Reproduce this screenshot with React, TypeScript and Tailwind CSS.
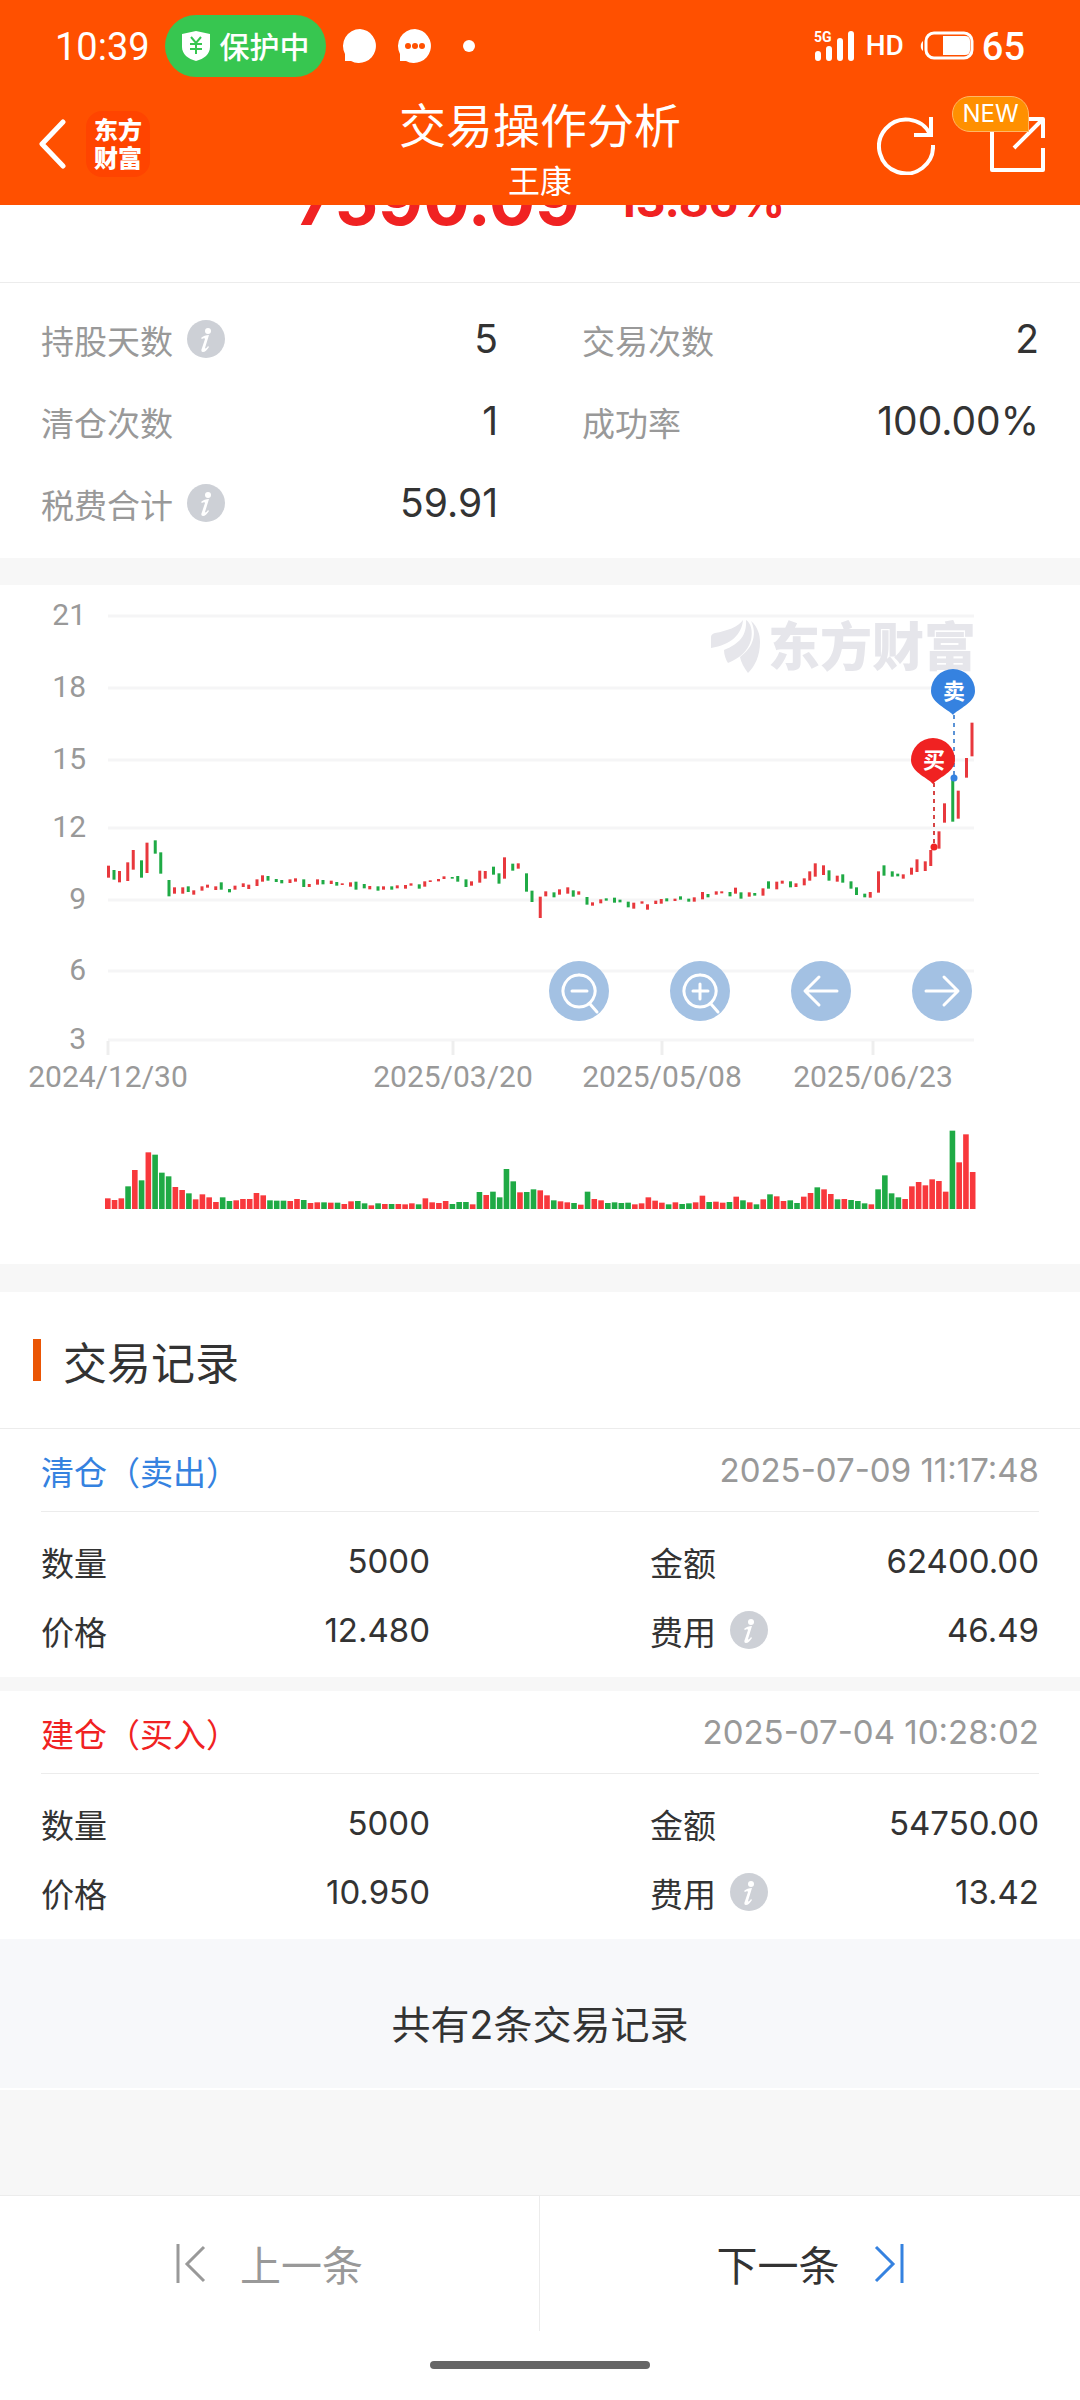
import React from "react";

type Move = "r" | "g";

const RED = "#e8383d";
const GREEN = "#1faa45";

/* Each entry: direction, top and bottom of the price bar, top of the volume bar. */
const SERIES: [Move, number, number, number][] = [
  ["r", 827, 863, 265], ["g", 840, 869, 270], ["r", 843, 877, 265], ["r", 817, 873, 229],
  ["r", 780, 839, 180], ["g", 811, 863, 211], ["r", 758, 849, 127], ["g", 751, 791, 134],
  ["g", 787, 851, 188], ["g", 870, 919, 199], ["r", 892, 911, 231], ["r", 892, 911, 240],
  ["g", 889, 906, 250], ["r", 901, 914, 268], ["r", 889, 902, 253], ["r", 884, 893, 262],
  ["r", 889, 900, 276], ["g", 877, 899, 262], ["g", 897, 907, 273], ["r", 887, 899, 271],
  ["r", 880, 891, 267], ["r", 884, 897, 267], ["r", 868, 888, 249], ["r", 856, 875, 256],
  ["g", 858, 872, 271], ["g", 867, 876, 272], ["g", 870, 880, 272], ["r", 868, 879, 273],
  ["r", 865, 875, 267], ["g", 868, 891, 270], ["r", 882, 891, 279], ["r", 868, 884, 277],
  ["g", 870, 883, 277], ["r", 872, 882, 278], ["g", 876, 887, 278], ["r", 880, 885, 282],
  ["r", 877, 890, 274], ["g", 875, 899, 273], ["g", 882, 895, 280], ["r", 888, 898, 286],
  ["g", 889, 902, 280], ["r", 889, 899, 282], ["g", 889, 899, 282], ["r", 886, 895, 282],
  ["r", 885, 896, 283], ["r", 880, 887, 280], ["g", 883, 896, 283], ["r", 874, 890, 265],
  ["r", 871, 876, 277], ["r", 867, 874, 279], ["r", 859, 867, 273], ["g", 861, 866, 282],
  ["g", 858, 875, 276], ["g", 868, 891, 276], ["r", 874, 887, 283], ["r", 842, 878, 246],
  ["r", 843, 866, 255], ["g", 830, 854, 245], ["g", 850, 881, 262], ["r", 802, 866, 177],
  ["g", 821, 842, 214], ["r", 820, 836, 247], ["g", 850, 905, 246], ["g", 902, 936, 238],
  ["r", 920, 984, 241], ["r", 904, 919, 256], ["g", 907, 922, 271], ["r", 898, 914, 274],
  ["r", 892, 911, 277], ["g", 901, 920, 279], ["r", 904, 914, 284], ["g", 921, 944, 245],
  ["r", 937, 947, 267], ["r", 928, 940, 271], ["g", 925, 932, 279], ["g", 923, 938, 277],
  ["g", 929, 937, 279], ["g", 935, 952, 278], ["r", 938, 956, 283], ["r", 934, 941, 280],
  ["r", 943, 959, 262], ["r", 932, 942, 272], ["r", 927, 941, 278], ["g", 925, 934, 283],
  ["r", 926, 933, 277], ["g", 919, 929, 282], ["g", 926, 935, 280], ["r", 922, 935, 277],
  ["r", 906, 928, 257], ["g", 912, 922, 276], ["r", 904, 914, 275], ["r", 904, 910, 278],
  ["g", 906, 919, 276], ["r", 893, 911, 260], ["g", 907, 926, 271], ["r", 907, 920, 277],
  ["g", 909, 917, 283], ["r", 895, 917, 268], ["g", 874, 896, 253], ["r", 875, 898, 259],
  ["r", 872, 881, 273], ["g", 874, 892, 271], ["r", 880, 891, 279], ["r", 865, 886, 260],
  ["r", 844, 872, 249], ["r", 820, 860, 232], ["r", 826, 855, 238], ["g", 841, 872, 252],
  ["r", 857, 875, 268], ["g", 853, 878, 267], ["g", 874, 896, 270], ["g", 892, 915, 273],
  ["g", 911, 922, 280], ["r", 906, 923, 283], ["r", 844, 908, 238], ["g", 826, 857, 196],
  ["g", 844, 860, 250], ["g", 851, 859, 262], ["r", 853, 866, 267], ["r", 833, 854, 229],
  ["r", 808, 846, 216], ["r", 814, 843, 226], ["r", 780, 828, 208], ["r", 724, 776, 213],
  ["r", 640, 698, 245], ["g", 570, 695, 62], ["r", 602, 686, 157], ["r", 504, 563, 73],
  ["r", 398, 499, 186],
];

const VOLUME_MOVES =
  "rrrgrgrggg" + "rrgrrrrggr" + "rrrrgggrrg" + "rrgrgrrggr" + "grgrrrgrrr" +
  "rgggrgrggg" + "grggrrgrrg" + "rgrrgggg" + "rrrrrgrggr" + "rgrrgrgrgr" +
  "grrggrrgrr" + "grgggrgggg" + "rrrrrrrgrrr";

const AXIS: [string, number][] = [
  ["21", 31], ["18", 103], ["15", 175], ["12", 243], ["9", 315], ["6", 386], ["3", 455],
];

const DATES: [string, number][] = [
  ["2024/12/30", 108], ["2025/03/20", 453], ["2025/05/08", 662], ["2025/06/23", 873],
];

function PriceChart() {
  return (
    <svg viewBox="0 0 1080 679" className="block w-full" role="img" aria-label="股价走势与买卖点">
      {AXIS.map(([label, y]) => (
        <g key={label}>
          <line x1="108" x2="974" y1={y} y2={y} stroke="#f5f5f6" strokeWidth="3" />
          <text x="86" y={y + 9} textAnchor="end" fontSize="30" fill="#999999" className="font-[Roboto]">
            {label}
          </text>
        </g>
      ))}
      {DATES.map(([label, x]) => (
        <g key={label}>
          <line x1={x} x2={x} y1="456" y2="470" stroke="#eeeeee" strokeWidth="3" />
          <text x={x} y="502" textAnchor="middle" fontSize="30" fill="#999999" className="font-[Roboto]">
            {label}
          </text>
        </g>
      ))}

      <g fill="#e6e6eb">
        <path d="M711 63 V52 C711 50 712 49 715 48 C727 46 738 42 743 35 C742 49 731 60 711 63 Z" />
        <path d="M746 35 C751 38 753 46 751 55 C748 66 740 73 728 78 C726 75 724 70 724 65 C739 59 747 51 746 35 Z" />
        <path d="M751 36 C758 42 760 50 760 57 C760 71 755 81 748 88 C744 83 741 77 740 72 C754 62 757 48 751 36 Z" />
        <text x="768" y="81" fontSize="52" fontWeight="900" className="font-['Noto_Sans_CJK_SC']">
          东方财富
        </text>
      </g>

      {SERIES.map(([move, top, bottom, volume], i) => {
        const x = 108 + (Math.floor(i * 2.457) * 11) / 4;
        return (
          <g key={i}>
            <rect x={x - 1} y={top / 3 + 5} width="3" height={(bottom - top) / 3} fill={move === "r" ? RED : GREEN} />
            <rect
              x={105 + i * 6.757}
              y={volume / 3 + 525}
              width="5.6"
              height={(297 - volume) / 3}
              fill={VOLUME_MOVES[i] === "r" ? "#f8383c" : GREEN}
            />
          </g>
        );
      })}

      <line x1="954" x2="954" y1="130" y2="190" stroke="#5b93d6" strokeWidth="2" strokeDasharray="4 4" />
      <circle cx="954" cy="193" r="3.5" fill="#3582e0" />
      <line x1="934" x2="934" y1="198" y2="260" stroke="#d64545" strokeWidth="2" strokeDasharray="4 4" />
      <circle cx="934" cy="262" r="3.5" fill="#f02222" />

      <path d="M953 130 C948 124 931 118 931 106 A22 22 0 1 1 975 106 C975 118 958 124 953 130 Z" fill="#3582e0" />
      <text x="954" y="114" textAnchor="middle" fontSize="22" fontWeight="700" fill="#fff" className="font-['Noto_Sans_CJK_SC']">
        卖
      </text>
      <path d="M933 199 C928 193 911 187 911 175 A22 22 0 1 1 955 175 C955 187 938 193 933 199 Z" fill="#f02222" />
      <text x="934" y="183" textAnchor="middle" fontSize="22" fontWeight="700" fill="#fff" className="font-['Noto_Sans_CJK_SC']">
        买
      </text>
    </svg>
  );
}

const TOOLS: { label: string; d: string }[] = [
  { label: "缩小", d: "M30 14 a16 16 0 1 0 0.1 0 M41 43 l7 8 M23 30 h15" },
  { label: "放大", d: "M30 14 a16 16 0 1 0 0.1 0 M41 43 l7 8 M23 30 h15 M30 23 v15" },
  { label: "左移", d: "M46 30 H15 M28 16 L14 30 L28 44" },
  { label: "右移", d: "M14 30 H45 M32 16 L46 30 L32 44" },
];

function InfoButton({ label }: { label: string }) {
  return (
    <button type="button" aria-label={label} className="-mt-2 size-[38px]">
      <svg viewBox="0 0 38 38" className="size-full">
        <circle cx="19" cy="19" r="19" fill="#cdd0d6" />
        <circle cx="21" cy="11" r="3" fill="#fff" />
        <path d="M14 18 C16 16 19 15 22 15 L18 28 C18 29 20 28 21 26 L22 27 C20 30 18 32 16 32 C14 32 14 30 15 28 L18 19 C18 18 16 18 15 19 Z" fill="#fff" />
      </svg>
    </button>
  );
}

function Stat({ label, value, info }: { label: string; value: string; info?: boolean }) {
  return (
    <div className="flex h-[82px] items-center justify-between">
      <dt className="flex items-center gap-[14px] pt-2 text-[33px] text-[#999]">
        {label}
        {info && <InfoButton label={label + "说明"} />}
      </dt>
      <dd className="text-[39px] text-[#333]">{value}</dd>
    </div>
  );
}

function Field({ label, value, info }: { label: string; value: string; info?: boolean }) {
  return (
    <div className="flex h-[69px] items-center justify-between">
      <dt className="flex items-center gap-[14px] pt-2">
        {label}
        {info && <InfoButton label={label + "说明"} />}
      </dt>
      <dd className="pt-0.5">{value}</dd>
    </div>
  );
}

type Trade = { kind: string; tone: string; time: string; qty: string; amount: string; price: string; fee: string };

const TRADES: Trade[] = [
  { kind: "清仓（卖出）", tone: "text-[#3582e0]", time: "2025-07-09 11:17:48", qty: "5000", amount: "62400.00", price: "12.480", fee: "46.49" },
  { kind: "建仓（买入）", tone: "text-[#f02222]", time: "2025-07-04 10:28:02", qty: "5000", amount: "54750.00", price: "10.950", fee: "13.42" },
];

function TradeCard({ trade }: { trade: Trade }) {
  return (
    <li className="bg-white px-[41px] text-[33px] text-[#333]">
      <div className="flex h-[83px] items-center justify-between border-b border-[#ececec]">
        <h3 className={"pt-2 " + trade.tone}>{trade.kind}</h3>
        <time className="pt-0.5 text-[#999]">{trade.time}</time>
      </div>
      <dl className="grid grid-cols-2 gap-x-[220px] pt-[14px] pb-[13px]">
        <Field label="数量" value={trade.qty} />
        <Field label="金额" value={trade.amount} />
        <Field label="价格" value={trade.price} />
        <Field label="费用" value={trade.fee} info />
      </dl>
    </li>
  );
}

function StatusBar() {
  return (
    <div className="flex h-[92px] items-center px-[55px] text-[38px]">
      <span className="w-[110px] pt-0.5 font-[Roboto]">10:39</span>
      <span className="flex h-[62px] w-[161px] items-center justify-center gap-[10px] rounded-full bg-[#37c650] text-[30px] font-medium">
        <svg viewBox="0 0 28 30" className="h-[30px] w-[28px]">
          <path d="M14 0 L28 3 V16 C28 23 22 28 14 30 C6 28 0 23 0 16 V3 Z" fill="#fff" />
          <path d="M9 6 L14 12 L19 6 M14 12 V23 M8 13 H20 M8 18 H20" stroke="#37c650" strokeWidth="2" fill="none" />
        </svg>
        <span className="pt-0.5">保护中</span>
      </span>
      <svg viewBox="0 0 36 36" className="ml-4 size-9">
        <path d="M18 1 a17 17 0 1 1 -9 32 L3 33 V26 A17 17 0 0 1 18 1 Z" fill="#fff" />
      </svg>
      <svg viewBox="0 0 36 36" className="ml-[19px] size-9">
        <path d="M18 1 a17 17 0 1 1 -9 32 L3 33 V26 A17 17 0 0 1 18 1 Z" fill="#fff" />
        <g fill="#ff5000"><circle cx="11" cy="18" r="3" /><circle cx="18" cy="18" r="3" /><circle cx="25" cy="18" r="3" /></g>
      </svg>
      <span className="ml-[30px] size-3 rounded-full bg-white" />
      <svg viewBox="0 0 40 32" className="ml-auto h-8 w-10">
        <text x="0" y="12" fontSize="14" fontWeight="700" fill="#fff" className="font-[Roboto]">5G</text>
        <g stroke="#fff" strokeWidth="6" strokeLinecap="round"><path d="M4 24 V28 M15 19 V28 M26 11 V28 M37 4 V28" /></g>
      </svg>
      <span className="ml-3 font-[Roboto] text-[28px] font-medium">HD</span>
      <svg viewBox="0 0 54 30" className="ml-4 h-[30px] w-[54px]">
        <path d="M3 10 C0 12 0 18 3 20 Z" fill="#fff" />
        <rect x="6" y="2" width="46" height="25" rx="8" fill="none" stroke="#fff" strokeWidth="3" />
        <path d="M23 5 H45 Q50 5 50 10 V19 Q50 24 45 24 H23 Z" fill="#fff" />
      </svg>
      <span className="ml-2 pt-0.5 font-[Roboto] font-medium">65</span>
    </div>
  );
}

export default function App() {
  return (
    <div className="flex min-h-screen flex-col bg-[#f7f7f7] font-[Inter,'Noto_Sans_CJK_SC',sans-serif]">
      <header className="bg-[#ff5000] text-white">
        <StatusBar />
        <div className="flex h-[113px] items-start justify-between px-[34px]">
          <div className="flex flex-1 items-center gap-[18px] pt-[19px]">
            <button type="button" aria-label="返回">
              <svg viewBox="0 0 34 50" className="h-[50px] w-[34px]" fill="none" stroke="#fff" strokeWidth="5" strokeLinecap="round" strokeLinejoin="round">
                <path d="M29 3 L8 25 L29 47" />
              </svg>
            </button>
            <a href="#home" className="flex h-[66px] w-[64px] flex-col items-center justify-center rounded-2xl bg-[#ff4400] pt-0.5 text-[24px] leading-[28px] font-black">
              <span>东方</span>
              <span>财富</span>
            </a>
          </div>
          <div className="text-center">
            <h1 className="text-[47px] leading-[67px]">交易操作分析</h1>
            <p className="text-[32px] leading-[46px]">王康</p>
          </div>
          <div className="flex flex-1 justify-end gap-[55px] pt-[23px]">
            <button type="button" aria-label="刷新">
              <svg viewBox="0 0 58 60" className="h-[60px] w-[58px]" fill="none" stroke="#fff" strokeWidth="4">
                <path d="M56 30 A27 27 0 1 1 53 19 M54 2 V20 H37" />
              </svg>
            </button>
            <button type="button" aria-label="分享" className="relative">
              <svg viewBox="0 0 56 60" className="h-[60px] w-14" fill="none" stroke="#fff" strokeWidth="4" strokeLinejoin="round">
                <path d="M2 14 V55 H53 V33 M36 4 H53 V23 M53 4 L24 33" />
              </svg>
              <span className="absolute -top-[19px] right-[17px] flex h-9 w-[77px] items-center justify-center rounded-full rounded-br-none border border-[#ffb766] bg-[#ff9000] text-[24px]">
                NEW
              </span>
            </button>
          </div>
        </div>
      </header>

      <section className="overflow-hidden bg-white">
        <div className="-mt-[43px] flex h-[121px] items-start justify-center gap-9 border-b border-[#ececec] font-bold text-[#f02222]">
          <span className="text-[69px] leading-[76px]">7590.09</span>
          <span className="text-[46px] leading-[76px]">13.86%</span>
        </div>
        <dl className="grid grid-cols-2 gap-x-[84px] px-[41px] pt-[15px] pb-[14px]">
          <Stat label="持股天数" value="5" info />
          <Stat label="交易次数" value="2" />
          <Stat label="清仓次数" value="1" />
          <Stat label="成功率" value="100.00%" />
          <Stat label="税费合计" value="59.91" info />
        </dl>
      </section>

      <section className="relative mt-[27px] bg-white">
        <PriceChart />
        <div className="absolute top-[376px] right-[108px] flex gap-[61px]">
          {TOOLS.map((tool) => (
            <button key={tool.label} type="button" aria-label={tool.label} className="size-[60px] rounded-full bg-[#a3c1e3]">
              <svg viewBox="0 0 60 60" className="size-full" fill="none" stroke="#fff" strokeWidth="3" strokeLinecap="round" strokeLinejoin="round">
                <path d={tool.d} />
              </svg>
            </button>
          ))}
        </div>
      </section>

      <section className="mt-7">
        <div className="flex h-[137px] items-center gap-[22px] border-b border-[#ececec] bg-white pl-[33px]">
          <span className="h-[42px] w-2 bg-[#ea5504]" />
          <h2 className="pt-2 text-[44px] text-[#333]">交易记录</h2>
        </div>
        <ul className="flex flex-col gap-[14px]">
          {TRADES.map((trade) => (
            <TradeCard key={trade.time} trade={trade} />
          ))}
        </ul>
      </section>

      <p className="flex h-[151px] items-center justify-center border-b-2 border-white bg-[#f7f8fa] pt-6 text-[39px] text-[#333]">
        共有2条交易记录
      </p>

      <nav className="mt-auto border-t border-[#ececec] bg-white">
        <div className="grid h-[135px] grid-cols-2 text-[41px] text-[#333]">
          <button type="button" disabled className="flex items-center justify-center gap-[34px] border-r border-[#ececec] text-[#999]">
            <svg viewBox="0 0 30 40" className="h-10 w-[30px]" fill="none" stroke="currentColor" strokeWidth="3">
              <path d="M2 0 V39 M28 3 L11 20 L28 37" />
            </svg>
            <span className="pt-1.5">上一条</span>
          </button>
          <button type="button" className="flex items-center justify-center gap-[34px]">
            <span className="pt-1.5">下一条</span>
            <svg viewBox="0 0 30 40" className="h-10 w-[30px]" fill="none" stroke="#3582e0" strokeWidth="3">
              <path d="M28 0 V39 M2 3 L19 20 L2 37" />
            </svg>
          </button>
        </div>
        <div className="flex h-[69px] justify-center pt-[30px]">
          <span className="h-2 w-[220px] rounded-full bg-[#666]" />
        </div>
      </nav>
    </div>
  );
}
